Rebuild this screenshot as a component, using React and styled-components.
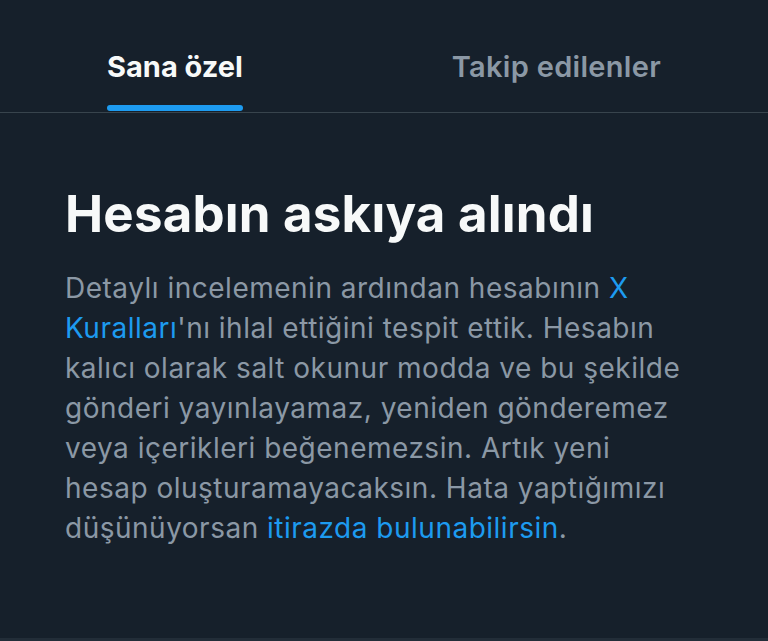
import React from "react";
import styled, { createGlobalStyle } from "styled-components";

const Global = createGlobalStyle`
  html, body { margin: 0; padding: 0; background: #16202b; }
  body { font-family: Inter, "Noto Sans", sans-serif; -webkit-font-smoothing: antialiased; }
`;

const Page = styled.div`
  width: 768px;
  height: 641px;
  background: #16202b;
  display: flex;
  flex-direction: column;
  box-sizing: border-box;
  border-bottom: 3px solid #222d38;
  overflow: hidden;
`;

const TabBar = styled.nav`
  display: flex;
  justify-content: space-between;
  padding: 0 107px;
  height: 112px;
  border-bottom: 1px solid #38444d;
  box-sizing: content-box;
`;

const Tab = styled.div`
  position: relative;
  display: flex;
  align-items: flex-start;
  padding-top: 50px;
  font-size: 29px;
  line-height: 34px;
  font-weight: ${(p) => (p.$active ? 700 : 600)};
  color: ${(p) => (p.$active ? "#f7f9f9" : "#8b98a5")};
  letter-spacing: ${(p) => (p.$active ? "0px" : "0.3px")};
  box-sizing: border-box;
`;

const Indicator = styled.span`
  position: absolute;
  left: 0;
  right: 0;
  bottom: 1px;
  height: 6px;
  border-radius: 3px;
  background: #1d9bf0;
`;

const Content = styled.section`
  padding: 71px 65px 0 65px;
`;

const Title = styled.h1`
  margin: 0;
  font-size: 51px;
  font-weight: 700;
  color: #f7f9f9;
  line-height: 60px;
  letter-spacing: 0.2px;
`;

const Body = styled.p`
  margin: 24px 0 0 0;
  font-size: 28px;
  line-height: 40px;
  color: #8b98a5;
  font-weight: 400;
  letter-spacing: 0.5px;
  white-space: nowrap;
`;

const Link = styled.span`
  color: #1d9bf0;
`;

export default function App() {
  return (
    <>
      <Global />
      <Page>
        <TabBar>
          <Tab $active>
            Sana özel
            <Indicator />
          </Tab>
          <Tab>Takip edilenler</Tab>
        </TabBar>
        <Content>
          <Title>Hesabın askıya alındı</Title>
          <Body>
            Detaylı incelemenin ardından hesabının <Link>X</Link>
            <br />
            <Link>Kuralları</Link>'nı ihlal ettiğini tespit ettik. Hesabın
            <br />
            kalıcı olarak salt okunur modda ve bu şekilde
            <br />
            gönderi yayınlayamaz, yeniden gönderemez
            <br />
            veya içerikleri beğenemezsin. Artık yeni
            <br />
            hesap oluşturamayacaksın. Hata yaptığımızı
            <br />
            düşünüyorsan <Link>itirazda bulunabilirsin</Link>.
          </Body>
        </Content>
      </Page>
    </>
  );
}
